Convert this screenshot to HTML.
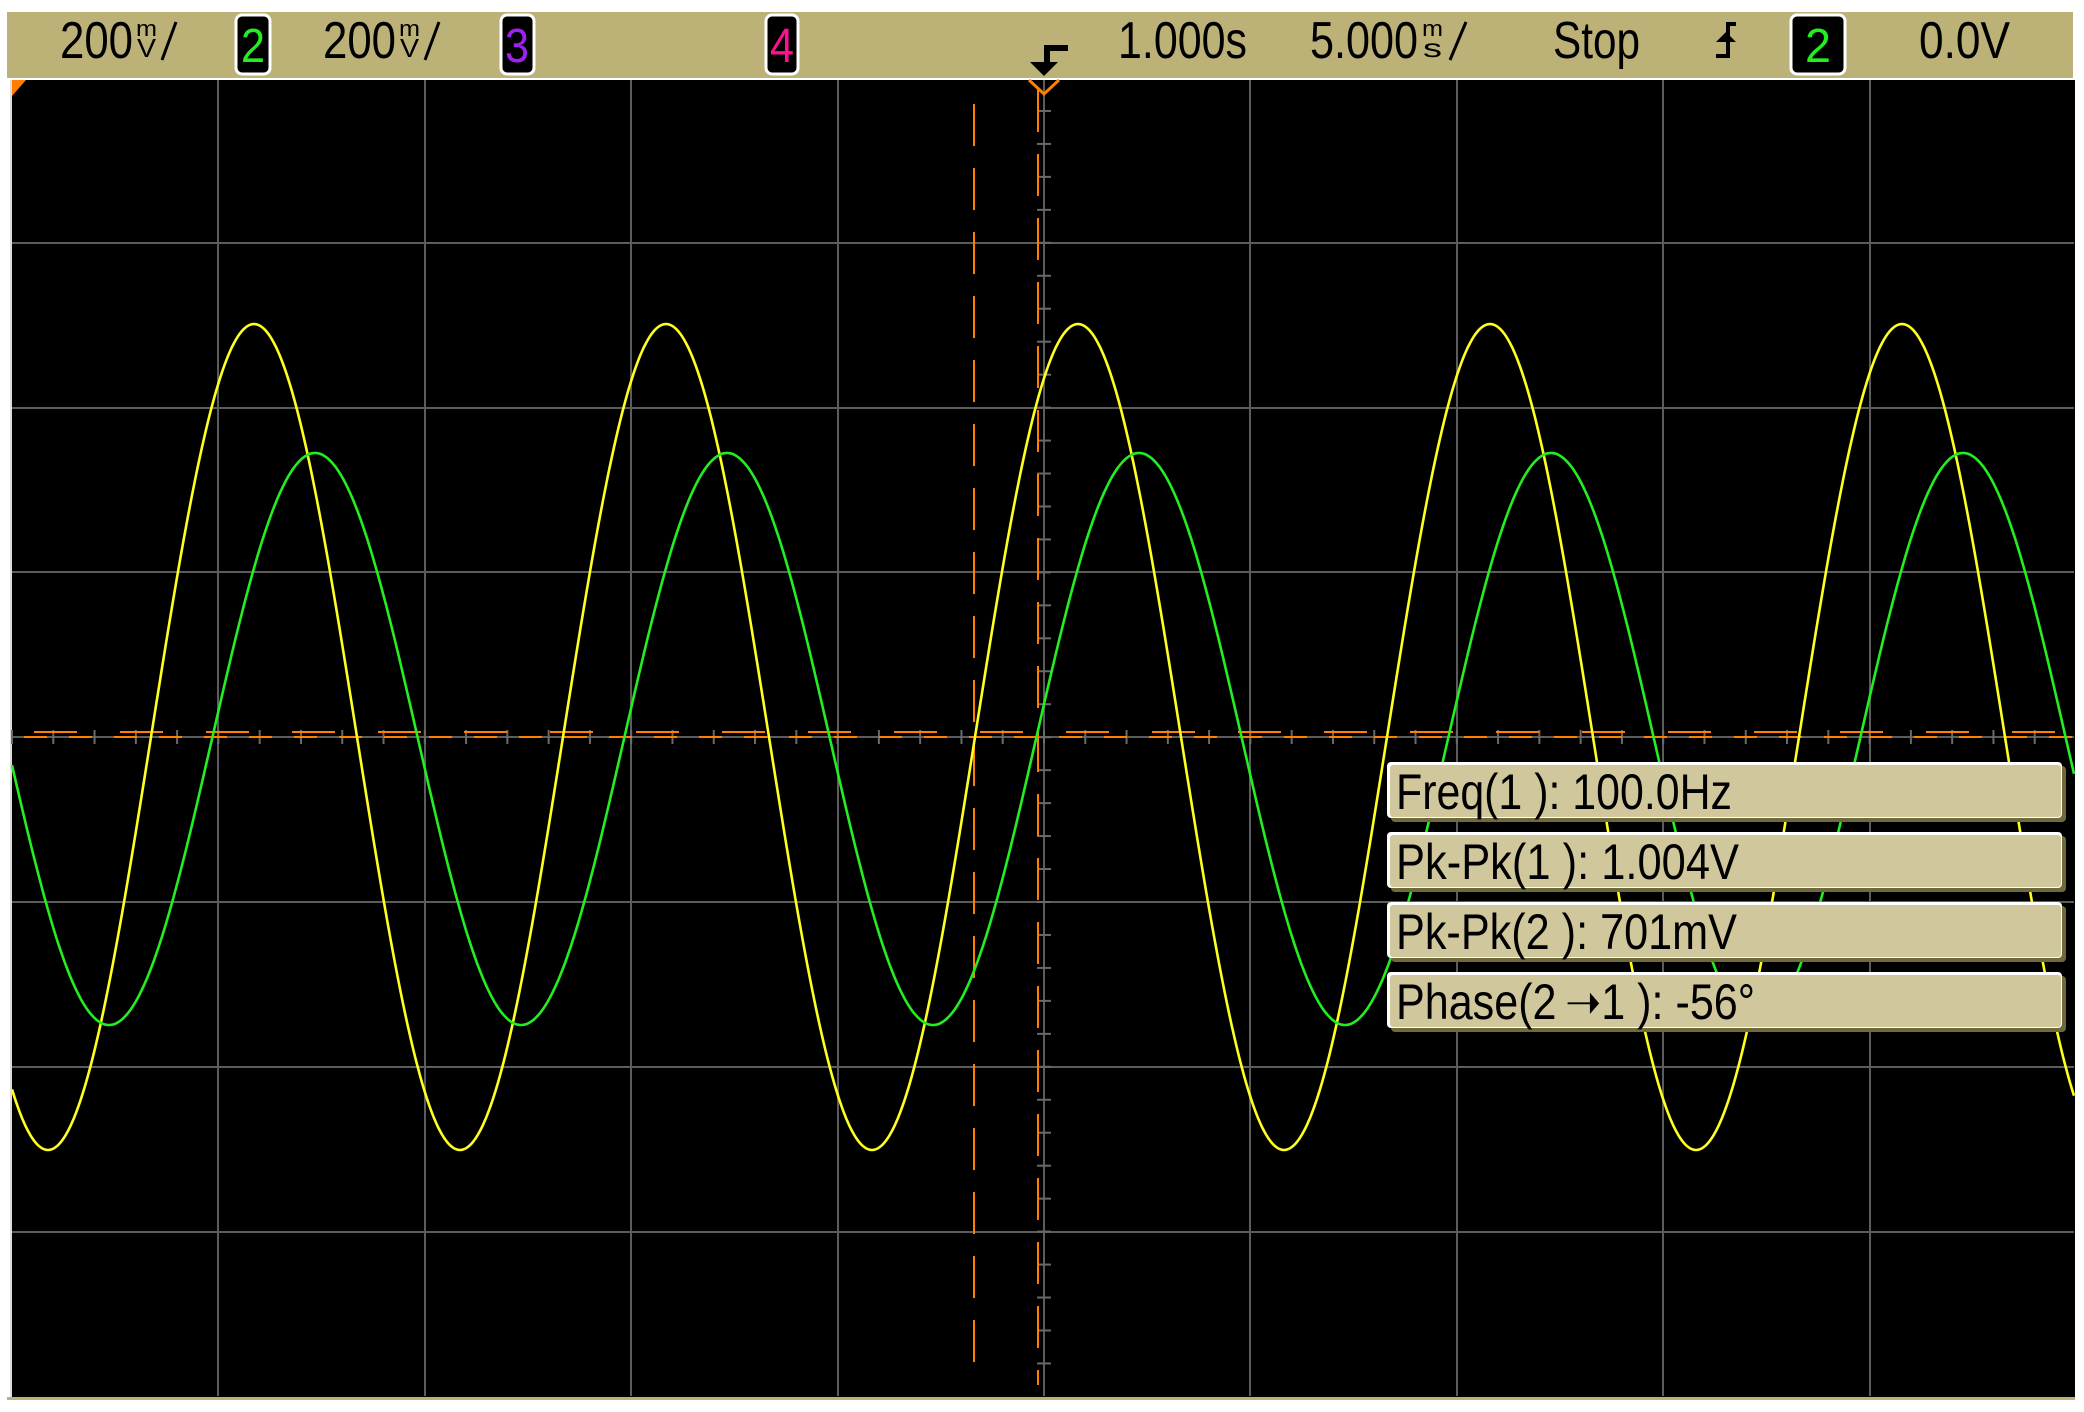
<!DOCTYPE html>
<html><head><meta charset="utf-8"><style>
html,body{margin:0;padding:0;background:#fff;width:2084px;height:1412px;overflow:hidden}
svg{display:block}
text{font-family:"Liberation Sans",sans-serif}
</style></head><body>
<svg id="s" width="2084" height="1412" viewBox="0 0 2084 1412" xmlns="http://www.w3.org/2000/svg">
<rect x="0" y="0" width="2084" height="1412" fill="#fff"/>
<!-- header -->
<rect x="7" y="12" width="2066" height="66" fill="#bcb177"/>
<rect x="7" y="78" width="2066" height="2" fill="#fff"/>
<!-- screen -->
<rect x="10" y="80" width="2065" height="1317" fill="#000"/>
<rect x="10" y="80" width="2" height="1317" fill="#ddd"/>
<rect x="7" y="1397" width="2068" height="3" fill="#bcb177"/>
<g id="grid" stroke="#5c5c5c" stroke-width="2"></g>
<g id="ticks" stroke="#6a6a6a" stroke-width="2"></g>
<!-- orange center dashes -->
<line x1="34" y1="732" x2="2074" y2="732" stroke="#ff8000" stroke-width="2" stroke-dasharray="43 43"/>
<line x1="24" y1="737" x2="2074" y2="737" stroke="#ff8000" stroke-width="2" stroke-dasharray="23 22"/>
<!-- orange vertical dashed -->
<line x1="974" y1="104" x2="974" y2="1370" stroke="#ff8000" stroke-width="2" stroke-dasharray="42 22"/>
<line x1="1038" y1="90" x2="1038" y2="1385" stroke="#ff8000" stroke-width="2" stroke-dasharray="42 22"/>
<polyline points="1029,80 1044,94 1059,80" fill="none" stroke="#ff8000" stroke-width="3"/>
<polygon points="12,80 26,80 12,96" fill="#ff8000"/>
<polyline id="yel" fill="none" stroke="#ffff20" stroke-width="2.6"/>
<polyline id="grn" fill="none" stroke="#22ee22" stroke-width="2.6"/>

<!-- header text -->
<g fill="#000" font-size="52">
<text x="60" y="58" textLength="73" lengthAdjust="spacingAndGlyphs">200</text>
<text x="136" y="36" font-size="22" textLength="21" lengthAdjust="spacingAndGlyphs">m</text>
<text x="137" y="57" font-size="26" textLength="19" lengthAdjust="spacingAndGlyphs">V</text>
<line x1="162" y1="60" x2="176" y2="22" stroke="#000" stroke-width="3"/>
<text x="323" y="58" textLength="73" lengthAdjust="spacingAndGlyphs">200</text>
<text x="399" y="36" font-size="22" textLength="21" lengthAdjust="spacingAndGlyphs">m</text>
<text x="400" y="57" font-size="26" textLength="19" lengthAdjust="spacingAndGlyphs">V</text>
<line x1="425" y1="60" x2="439" y2="22" stroke="#000" stroke-width="3"/>
<text x="1118" y="58" textLength="129" lengthAdjust="spacingAndGlyphs">1.000s</text>
<text x="1310" y="58" textLength="108" lengthAdjust="spacingAndGlyphs">5.000</text>
<text x="1422" y="36" font-size="22" textLength="21" lengthAdjust="spacingAndGlyphs">m</text>
<text x="1423" y="57" font-size="26" textLength="19" lengthAdjust="spacingAndGlyphs">s</text>
<line x1="1450" y1="60" x2="1466" y2="22" stroke="#000" stroke-width="3"/>
<text x="1553" y="58" textLength="87" lengthAdjust="spacingAndGlyphs">Stop</text>
<text x="1919" y="58" textLength="91" lengthAdjust="spacingAndGlyphs">0.0V</text>
</g>
<!-- channel boxes -->
<g>
<rect x="236" y="15" width="34" height="59" rx="6" fill="#000" stroke="#fff" stroke-width="3"/>
<text x="241" y="62" font-size="48" fill="#22ee22" textLength="24" lengthAdjust="spacingAndGlyphs">2</text>
<rect x="501" y="15" width="33" height="59" rx="6" fill="#000" stroke="#fff" stroke-width="3"/>
<text x="505" y="62" font-size="48" fill="#a020f0" textLength="24" lengthAdjust="spacingAndGlyphs">3</text>
<rect x="766" y="15" width="32" height="59" rx="6" fill="#000" stroke="#fff" stroke-width="3"/>
<text x="770" y="62" font-size="48" fill="#ff1090" textLength="24" lengthAdjust="spacingAndGlyphs">4</text>
<rect x="1791" y="15" width="54" height="59" rx="6" fill="#000" stroke="#fff" stroke-width="3"/>
<text x="1805" y="62" font-size="48" fill="#22ee22" textLength="26" lengthAdjust="spacingAndGlyphs">2</text>
</g>
<!-- trigger icon -->
<path d="M1044,45 L1068,45 L1068,51 L1050,51 L1050,62 L1058,62 L1044,76 L1030,62 L1044,62 Z" fill="#000"/>
<!-- slope icon -->
<path d="M1726,22 L1736,22 L1736,26 L1730,26 L1730,36 L1736,42 L1716,42 L1726,32 Z M1726,42 L1730,42 L1730,58 L1716,58 L1716,54 L1726,54 Z" fill="#000"/>

<!-- measurement boxes -->
<g id="meas"></g>
</svg>
<script>
var NS="http://www.w3.org/2000/svg";
function el(p,t,a,txt){var e=document.createElementNS(NS,t);for(var k in a)e.setAttribute(k,a[k]);if(txt!=null)e.textContent=txt;p.appendChild(e);return e;}
var g=document.getElementById('grid');
for(var i=1;i<10;i++){var x=Math.round(12+206.4*i);el(g,'line',{x1:x,y1:80,x2:x,y2:1396});}
for(var j=1;j<8;j++){var y=Math.round(78+164.8*j);el(g,'line',{x1:12,y1:y,x2:2074,y2:y});}
var t=document.getElementById('ticks');
for(var k=0;k<50;k++){var x=12+206.4*k/5;el(t,'line',{x1:x,y1:730,x2:x,y2:744});}
for(var k=1;k<40;k++){var y=78+164.8*k/5;el(t,'line',{x1:1037,y1:y,x2:1051,y2:y});}
function wave(id,c,a,x0){var p=[];for(var x=12;x<=2074;x+=2){p.push(x+','+(c-a*Math.sin(2*Math.PI*(x-x0)/412)).toFixed(1));}document.getElementById(id).setAttribute('points',p.join(' '));}
wave('yel',737,413,151);wave('grn',739,286,212);
var m=document.getElementById('meas');
var data=[["Freq(1 ): 100.0Hz",336],["Pk-Pk(1 ): 1.004V",343],["Pk-Pk(2 ): 701mV",341],["Phase(2\u2009\u279d1 ): -56\u00b0",359]];
var tops=[764,834,904,974];
for(var i=0;i<4;i++){var y=tops[i];
el(m,'rect',{x:1391,y:y+2,width:675,height:56,rx:4,fill:'#6e6a3c'});
el(m,'rect',{x:1387,y:y-2,width:675,height:56,rx:4,fill:'#fff'});
el(m,'rect',{x:1390,y:y+1,width:671,height:52,rx:3,fill:'#d0c89c'});
el(m,'text',{x:1396,y:y+45,'font-size':50,fill:'#000',textLength:data[i][1],lengthAdjust:'spacingAndGlyphs'},data[i][0]);}
</script>
</body></html>
